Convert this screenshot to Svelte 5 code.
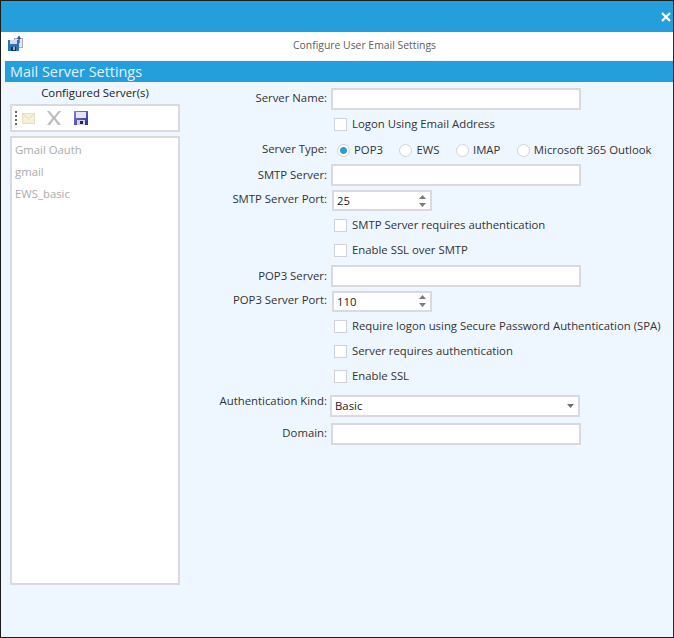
<script>
  const servers = ["Gmail Oauth", "gmail", "EWS_basic"];
  const serverTypes = ["POP3", "EWS", "IMAP", "Microsoft 365 Outlook"];
  let serverType = "POP3";
</script>

<div class="window">
  <header class="titlebar">
    <button class="close" aria-label="Close">
      <svg width="10" height="10" viewBox="0 0 10 10">
        <path d="M1 1L9 9M9 1L1 9" stroke="#fff" stroke-width="2.2" />
      </svg>
    </button>
  </header>

  <div class="caption">
    <svg class="caption-icon" width="16" height="16" viewBox="0 0 16 16">
      <rect x="6.500" y="2.500" width="8" height="9" fill="#e4e6ea" stroke="#a9aeb5" />
      <path d="M0 4h11v11H0z" fill="#2f73b5" />
      <path d="M2 4h7v4H2z" fill="#d5dce4" />
      <path d="M3 11h5v4H3z" fill="#10335e" />
      <path d="M5 11h2v3H5z" fill="#8fb4d6" />
      <path d="M11 7V2M9.500 3L11 0.500 12.500 3" stroke="#2a62a8" stroke-width="1.300" fill="none" />
    </svg>
    <span>Configure User Email Settings</span>
  </div>

  <h1>Mail Server Settings</h1>

  <div class="content">
    <aside>
      <div class="aside-title">Configured Server(s)</div>
      <div class="toolbar">
        <svg width="3" height="15" viewBox="0 0 3 15">
          <path d="M0 0h2v2H0zM0 4h2v2H0zM0 8h2v2H0zM0 12h2v2H0z" fill="#666" />
        </svg>
        <svg class="mail" width="13" height="11" viewBox="0 0 13 11">
          <rect x=".5" y=".5" width="12" height="10" fill="#f8f1da" stroke="#e8dfc0" />
          <path d="M1 1l5.500 5L12 1" fill="none" stroke="#e6dcb8" />
        </svg>
        <svg class="remove" width="16" height="16" viewBox="0 0 16 16">
          <path d="M1 1h2.500L8 6.500 12.500 1H15L9.500 8l5.500 7h-3L8 9.500 4 15H1l5.500-7z" fill="#bcbcbc" />
        </svg>
        <svg class="save" width="14" height="14" viewBox="0 0 14 14">
          <defs>
            <linearGradient id="disk" x1="0" y1="0" x2="1" y2="1">
              <stop offset="0" stop-color="#7c80da" />
              <stop offset="1" stop-color="#2f3190" />
            </linearGradient>
          </defs>
          <path d="M0 0h14v14H0z" fill="url(#disk)" />
          <path d="M2 1h10v6H2z" fill="#e4e6f8" />
          <path d="M3 9h8v5H3z" fill="#d2d3de" />
          <path d="M6 10h3v3H6z" fill="#25264f" />
        </svg>
      </div>
      <ul>
        {#each servers as server}
          <li>{server}</li>
        {/each}
      </ul>
    </aside>

    <form class="form">
      <label for="name">Server Name:</label>
      <input id="name" class="text" />

      <label class="check-row"><input type="checkbox" />Logon Using Email Address</label>

      <span class="label up1">Server Type:</span>
      <div class="radios">
        {#each serverTypes as type}
          <label><input type="radio" name="type" value={type} bind:group={serverType} />{type}</label>
        {/each}
      </div>

      <label for="smtp">SMTP Server:</label>
      <input id="smtp" class="text" />

      <span class="label up2">SMTP Server Port:</span>
      <div class="spinner">
        <span>25</span>
        <svg width="7" height="14" viewBox="0 0 7 14"><path d="M3.500 1L7 5H0zM3.500 13L0 9h7z" fill="#7a7a7a" /></svg>
      </div>

      <label class="check-row"><input type="checkbox" />SMTP Server requires authentication</label>
      <label class="check-row"><input type="checkbox" />Enable SSL over SMTP</label>

      <label for="pop">POP3 Server:</label>
      <input id="pop" class="text" />

      <span class="label up1">POP3 Server Port:</span>
      <div class="spinner">
        <span>110</span>
        <svg width="7" height="14" viewBox="0 0 7 14"><path d="M3.500 1L7 5H0zM3.500 13L0 9h7z" fill="#7a7a7a" /></svg>
      </div>

      <label class="check-row"><input type="checkbox" />Require logon using Secure Password Authentication (SPA)</label>
      <label class="check-row"><input type="checkbox" />Server requires authentication</label>
      <label class="check-row"><input type="checkbox" />Enable SSL</label>

      <span class="label up4">Authentication Kind:</span>
      <div class="select">
        <span>Basic</span>
        <svg width="7" height="4" viewBox="0 0 7 4"><path d="M0 0h7L3.500 4z" fill="#6e6e6e" /></svg>
      </div>

      <label class="up1" for="domain">Domain:</label>
      <input id="domain" class="text" />
    </form>
  </div>
</div>

<style>
  :global(body) {
    background: #000;
  }

  .window {
    box-sizing: border-box;
    width: 674px;
    height: 638px;
    display: flex;
    flex-direction: column;
    border: 1px solid #1c1c1c;
    border-right-color: #2a2a2a;
    background: #eef7ff;
    color: #333;
    font-family: "Open Sans", "Noto Sans", sans-serif;
    font-size: 11.35px;
    overflow: hidden;
  }

  .titlebar {
    height: 30px;
    flex: none;
    display: flex;
    justify-content: flex-end;
    align-items: center;
    background: #259fdb;
    padding: 1px 2px 0 0;
  }

  .close {
    all: unset;
    display: flex;
  }

  .caption {
    box-sizing: border-box;
    height: 28px;
    flex: none;
    display: flex;
    align-items: center;
    justify-content: center;
    position: relative;
    background: #fff;
    color: #606060;
    font-size: 10.4px;
    padding: 0 0 2px 55px;
  }

  .caption-icon {
    position: absolute;
    left: 7px;
    top: 4px;
  }

  h1 {
    margin: 1px 0 0 4px;
    height: 21px;
    flex: none;
    padding-left: 5px;
    background: #259fdb;
    color: #e2f2fc;
    font-size: 14.4px;
    font-weight: 400;
    line-height: 21px;
  }

  .content {
    flex: 1;
    display: flex;
    min-height: 0;
  }

  aside {
    flex: none;
    width: 170px;
    margin: 0 0 52px 9px;
    display: flex;
    flex-direction: column;
  }

  .aside-title {
    height: 22px;
    line-height: 22px;
    text-align: center;
    color: #222;
  }

  .toolbar {
    box-sizing: border-box;
    height: 28px;
    display: flex;
    align-items: center;
    padding-left: 3px;
    border: 2px solid #d9d9df;
    background: #fff;
  }

  .mail {
    margin-left: 4px;
  }

  .remove {
    margin-left: 11px;
  }

  .save {
    margin-left: 12px;
  }

  ul {
    box-sizing: border-box;
    flex: 1;
    list-style: none;
    margin: 4px 0 0;
    padding: 1px 3px;
    border: 2px solid #d9d9df;
    background: #fff;
    color: #ababab;
  }

  li {
    height: 22px;
    line-height: 22px;
  }

  .form {
    flex: 1;
    display: grid;
    grid-template-columns: 147px 1fr;
    grid-template-rows: 25px 27px 24px 26px 25px 24px 26px 26px 24px 26px 24px 26px 33px 24px;
    column-gap: 4px;
    align-items: center;
    align-content: start;
    padding-top: 4px;
  }

  .form > label:not(.check-row),
  .label {
    text-align: right;
    color: #333;
    padding-bottom: 2px;
  }

  .form > label.up1,
  .label.up1 {
    padding-bottom: 4px;
  }

  .label.up2 {
    padding-bottom: 5px;
  }

  .label.up4 {
    padding-bottom: 10px;
  }

  .text,
  .spinner,
  .select {
    box-sizing: border-box;
    width: 250px;
    height: 22px;
    border: 2px solid #d9d9df;
    background: #fff;
  }

  .text {
    padding: 0;
    outline: none;
    border-radius: 0;
  }

  .spinner {
    width: 100px;
    height: 21px;
    margin-left: 1px;
    display: flex;
    align-items: center;
    justify-content: space-between;
    padding: 0 4px 0 3px;
    color: #222;
  }

  .select {
    margin-left: -1px;
    display: flex;
    align-items: center;
    justify-content: space-between;
    padding: 0 4px 0 3px;
    color: #222;
  }

  .check-row {
    grid-column: 2;
    display: flex;
    align-items: center;
    gap: 5px;
    margin-left: 3px;
    padding-bottom: 2px;
    white-space: nowrap;
  }

  input[type="checkbox"],
  input[type="radio"] {
    appearance: none;
    box-sizing: border-box;
    flex: none;
    width: 13px;
    height: 13px;
    margin: 2px 0 0;
    border: 1px solid #d2d2d6;
    background: #fff;
  }

  input[type="radio"] {
    border-radius: 50%;
  }

  input[type="radio"]:checked {
    background: radial-gradient(circle, #259fdb 0 3px, #fff 4px);
  }

  .radios {
    display: flex;
    align-items: center;
    gap: 16.5px;
    margin-left: 6px;
    padding-bottom: 2px;
    white-space: nowrap;
    color: #333;
  }

  .radios label {
    display: flex;
    align-items: center;
    gap: 4px;
  }
</style>
